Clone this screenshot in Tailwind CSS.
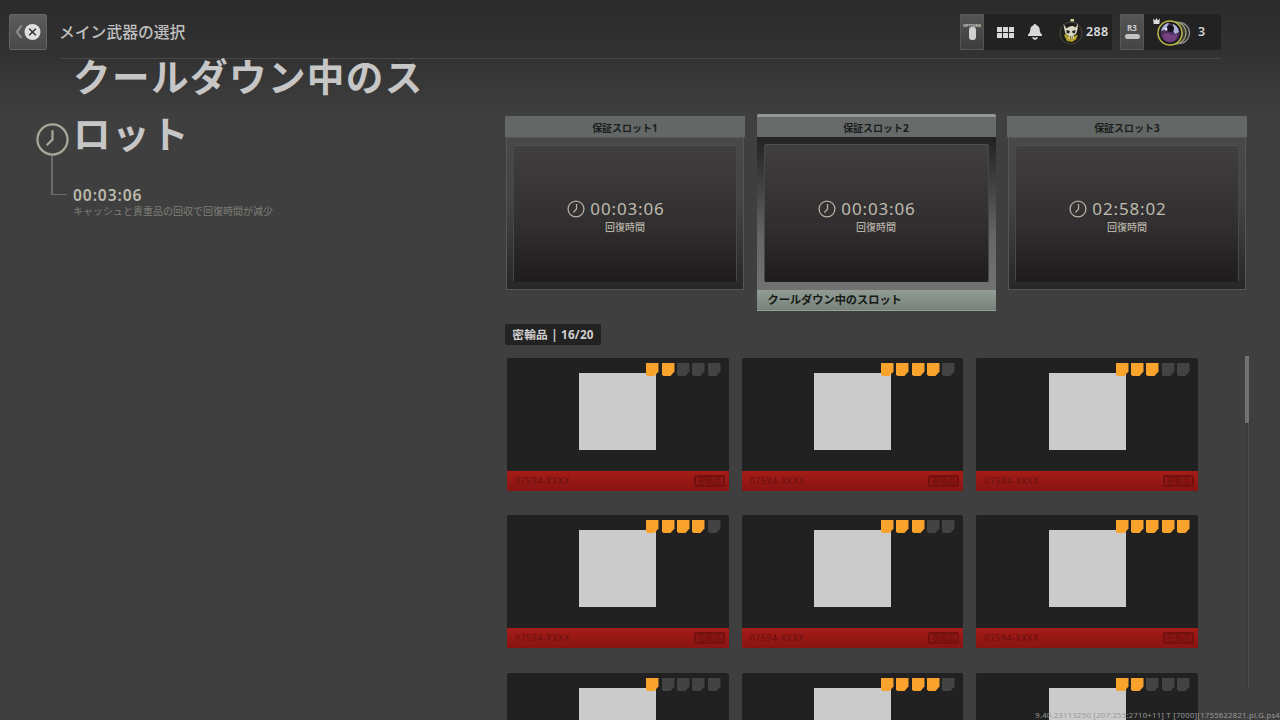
<!DOCTYPE html>
<html lang="ja">
<head>
  <meta charset="UTF-8">
  <meta name="viewport" content="width=device-width, initial-scale=1.0">
  <title>メイン武器の選択</title>
  <script src="https://cdn.jsdelivr.net/npm/@tailwindcss/browser@4"></script>
</head>
<body class="relative flex h-screen flex-col overflow-hidden bg-[#3f3f3f] bg-linear-to-b from-[#2b2b2b] from-0% via-[#323232] via-[8%] to-[#3f3f3f] to-[16%] font-['Noto_Sans','Noto_Sans_CJK_JP',sans-serif] text-[#c8c8c8]">

  <!-- Top bar -->
  <header class="flex h-[59px] shrink-0 items-start pt-[14px] pl-[9px]">
    <button class="flex h-9 w-[38px] items-center justify-center rounded-xs border border-[#656565] bg-linear-to-b from-[#5c5c5c] to-[#494949]">
      <svg width="28" height="20" viewBox="0 0 28 20">
        <path d="M7.500 3.500L3 10l4.500 6" fill="none" stroke="#929292" stroke-width="2"/>
        <circle cx="18.500" cy="10" r="8" fill="#dedede"/>
        <path d="M15.200 6.700l6.600 6.600M21.800 6.700l-6.600 6.600" stroke="#333" stroke-width="1.500"/>
      </svg>
    </button>
    <div class="ml-[13px] flex h-[45px] w-[1161px] items-start border-b border-[#484848]">
      <h1 class="-ml-px text-[15.8px] leading-9 font-medium text-[#c0c0c0]">メイン武器の選択</h1>

      <div class="ml-auto flex h-9 w-[152px] items-center bg-[#222]">
        <div class="flex h-full w-6 flex-col items-center border border-[#565656] bg-linear-to-b from-[#555] to-[#3c3c3c] pt-[9px]">
          <span class="text-[4px] leading-[4px] font-bold text-[#ccc]">OPTIONS</span>
          <span class="-mt-px h-[13px] w-[7px] rounded-[3px] bg-[#d0d0d0]"></span>
        </div>
        <svg class="ml-[13px]" width="17" height="11" viewBox="0 0 17 11" fill="#d8d8d8">
          <path d="M0 0h5v5H0zM6 0h5v5H6zM12 0h5v5h-5zM0 6h5v5H0zM6 6h5v5H6zM12 6h5v5h-5z"/>
        </svg>
        <svg class="ml-[14px]" width="14" height="16" viewBox="0 0 14 16" fill="#d8d8d8">
          <path d="M7 0c1 0 1.300.6 1.400 1.300C11 2 11.700 4 11.800 6.500c.1 2 .9 2.900 2.200 4V12H0v-1.500c1.300-1.100 2.100-2 2.200-4C2.300 4 3 2 5.600 1.300 5.700.6 6 0 7 0zM4 13.300h1.800q1.200 1 2.400 0H10Q9.200 16 7 16t-3-2.700z"/>
        </svg>
        <svg class="ml-[16px]" width="26" height="28" viewBox="0 0 26 28">
          <circle cx="13" cy="15" r="11" fill="#1d1d1a" stroke="#4c4c42"/>
          <path d="M12.500 1h3.500v2.500h-3.500z" fill="#d6d69c"/>
          <path d="M5.500 6l3 4.500Q11 7.500 15 8l2.500 1.500L20 5.500l-.5 6-1.500 4.500-3 2h-4l-3.500-2L6.500 12z" fill="#d8d7c2"/>
          <path d="M8.500 12l3.500 1-1 2.500-2.500-.5zM17.500 12L14 13l1 2.500 2-.5z" fill="#262420"/>
          <path d="M6 17l2.500-1 2.500 3.500 4 .5 2-2.500 3-.5-2 4.500-4 2.500-5-1z" fill="#b3a223"/>
          <path d="M10.500 18H16v3h-5.500z" fill="#e3dca0"/>
          <path d="M12.300 18v3M14.200 18v3" stroke="#534a20" stroke-width=".8"/>
        </svg>
        <span class="ml-[2px] text-[12.5px] font-semibold tracking-[0.4px] text-[#dedede]">288</span>
      </div>

      <div class="ml-2 flex h-9 w-[101px] items-center bg-[#222]">
        <div class="flex h-full w-6 flex-col items-center border border-[#585858] bg-linear-to-b from-[#555] to-[#444] pt-[8px]">
          <span class="text-[8px] leading-[10px] font-bold text-[#ccc]">R3</span>
          <span class="mt-px h-[5px] w-[15px] rounded-[3px] bg-[#c4c4c4]"></span>
        </div>
        <svg class="ml-[9px]" width="40" height="30" viewBox="0 0 40 30">
          <circle cx="26" cy="16" r="10.500" fill="#292929" stroke="#888" stroke-width="1.300"/>
          <circle cx="22" cy="16" r="11" fill="#393939" stroke="#999b70" stroke-width="1.300"/>
          <circle cx="17" cy="16" r="12" fill="#1b1b20" stroke="#b8ba44" stroke-width="1.500"/>
          <circle cx="17" cy="16" r="9.500" fill="#4b3060"/>
          <path d="M9 11q3-5 7-5l-2 4-3 3-3 1zM20 7q5 2 6 8l-4 2-3-5z" fill="#aeb3d4"/>
          <circle cx="17.500" cy="11.500" r="3.500" fill="#17121f"/>
          <circle cx="13" cy="12" r="1.500" fill="#e6e6f2"/>
          <path d="M9.500 18q5-4 9 0l6-1q-1 8-8 8-6-1-7-7z" fill="#75417f"/>
          <path d="M0 1.500l2 2L3.500 1 5 3.500l2-2L6.300 7H.7z" fill="#ddd"/>
        </svg>
        <span class="ml-[5px] text-[12.5px] font-semibold text-[#d0d0d0]">3</span>
      </div>
    </div>
  </header>

  <main class="flex min-h-0 flex-1">
    <!-- Selected slot info -->
    <section class="w-[505px] shrink-0 pl-9">
      <div class="flex items-start">
        <div class="flex w-[37px] shrink-0 flex-col pt-[64px]">
          <svg width="33" height="33" viewBox="0 0 34 34" fill="none" stroke="#a9a99b" stroke-width="2.300">
            <circle cx="17" cy="17" r="15.500"/>
            <path d="M17 7.500V17l-6 6"/>
          </svg>
          <div class="ml-[15px] h-[39px] w-4 border-b border-l-2 border-[#6c6c68]"></div>
        </div>
        <div>
          <h2 class="-mt-[11px] w-[370px] text-[37.6px] leading-[57px] font-bold tracking-[1.4px] text-[#c6c6c6]">クールダウン中のス<br>ロット</h2>
          <p class="mt-[25px] text-[15.6px] leading-4 font-semibold tracking-[0.9px] text-[#babaac]">00:03:06</p>
          <p class="mt-[3px] text-[10px] leading-[10px] text-[#7e7e78]">キャッシュと貴重品の回収で回復時間が減少</p>
        </div>
      </div>
    </section>

    <section class="flex min-h-0 flex-1 flex-col pt-[57px]">
      <div id="slots" class="flex h-[208px] shrink-0 items-start gap-[11.5px]"></div>

      <div class="flex h-[21px] w-24 shrink-0 items-center justify-center rounded-xs bg-[#222] text-[11.7px] font-bold tracking-[0.2px] whitespace-pre text-[#d0d0d0]">密輸品 | 16/20</div>

      <div class="flex min-h-0 flex-1 pt-[11px]">
        <div id="items" class="mt-0.5 ml-0.5 grid w-[691px] grid-cols-3 content-start gap-x-[13px] gap-y-6 overflow-hidden"></div>
        <div class="ml-[47px] h-[332px] w-1 border-r border-[#4b4b4b] bg-[#3b3b3b]">
          <div class="h-[67px] w-1 bg-[#727272]"></div>
        </div>
      </div>
    </section>
  </main>

  <!-- Build info overlay -->
  <div class="absolute right-0 bottom-0 text-[7.7px] leading-[9px] tracking-[0.26px] whitespace-nowrap text-[#999]">9.40.23113250 [207:255:2710+11] T [7000][1755622821.pl.G.ps4</div>

<script>
  const slots = [
    { name: '保証スロット1', time: '00:03:06' },
    { name: '保証スロット2', time: '00:03:06', selected: true },
    { name: '保証スロット3', time: '02:58:02' },
  ];
  const ratings = [2, 4, 3, 4, 3, 5, 1, 4, 2];

  const slotHeader = 'flex h-[21px] items-center justify-center bg-[#636867] pt-[3px] text-[10px] font-bold text-[#1b1e1d]';
  const selectedHeader = 'flex h-[23px] items-center justify-center rounded-t-xs border-t-[3px] border-[#939a97] bg-[#666a69] pt-0.5 text-[10px] font-bold text-[#1b1e1d]';
  const slotBody = 'h-[153px] border border-[#565656] bg-linear-to-b from-[#484848] via-[#464445] via-40% to-[#282728] px-[6px] py-[7px]';
  const selectedBody = 'h-[153px] bg-linear-to-b from-[#222] via-[#666] via-65% to-[#727272] px-[7px] pt-[7px] pb-[8px]';

  document.getElementById('slots').innerHTML = slots.map(slot => `
    <div class="${slot.selected ? '-mt-0.5 w-[239px]' : 'w-[240px]'}">
      <div class="${slot.selected ? selectedHeader : slotHeader}">${slot.name}</div>
      <div class="${slot.selected ? '' : 'px-px'}">
        <div class="${slot.selected ? selectedBody : slotBody}">
          <div class="flex h-full flex-col items-center rounded-xs border border-t-[#505050] border-x-[#474747] border-b-[#222] bg-linear-to-b from-[#403e3f] via-[#302e2f] via-60% to-[#1e1c1d] ${slot.selected ? 'pt-[53px]' : 'pt-[52px]'}">
            <div class="flex items-center gap-[5px] pr-[18px]">
              <svg width="18" height="18" viewBox="0 0 34 34" fill="none" stroke="#b5b1a5" stroke-width="2.400">
                <circle cx="17" cy="17" r="15"/>
                <path d="M18 7.500V17l-6 7"/>
              </svg>
              <span class="text-[17px] leading-[22px] tracking-[0.85px] text-[#bfbbad]">${slot.time}</span>
            </div>
            <span class="text-[10px] leading-[14px] font-medium text-[#b5b1a5]">回復時間</span>
          </div>
        </div>
      </div>
      ${slot.selected ? '<div class="flex h-[21px] items-center border-b border-[#94a095] bg-linear-to-b from-[#929c94] to-[#76827a] pl-[11px] text-[11.2px] font-bold text-[#161916]">クールダウン中のスロット</div>' : ''}
    </div>`).join('');

  // Rarity pips have a cut bottom right corner
  const pip = on => `<svg width="13" height="13" viewBox="0 0 13 13"><path d="M0 0h12.500v8.500L8.500 13H1.500L0 11.500z" fill="${on ? '#f9a22c' : '#434343'}"/></svg>`;

  const footer = `
      <div class="flex h-[20px] items-center justify-between bg-linear-to-b from-[#a61c18] to-[#881412] pr-1 pl-2 text-[#6c1210]">
        <span class="text-[8.5px] font-medium tracking-[0.7px]">07594-XXXX</span>
        <span class="flex h-3 w-[31px] items-center justify-center rounded-xs border-2 border-[#74110f] bg-[#8f1614] text-[8px] leading-none font-bold text-[#76110f]">密輸品</span>
      </div>`;

  // The third row is scrolled half out of view, so it gets no footer
  document.getElementById('items').innerHTML = ratings.map((rating, i) => `
    <div class="relative ${i < 6 ? 'h-[133.3px]' : 'h-12'}">
      <div class="flex justify-center overflow-hidden rounded-t-xs bg-[#212121] pt-[15px] ${i < 6 ? 'h-[113px]' : 'h-12'}">
        <div class="size-[77px] shrink-0 bg-[#cbcbcb]"></div>
      </div>
      <div class="absolute top-[5px] right-[8px] flex gap-[2.3px]">${[1, 2, 3, 4, 5].map(n => pip(n <= rating)).join('')}</div>
      ${i < 6 ? footer : ''}
    </div>`).join('');
</script>
</body>
</html>
